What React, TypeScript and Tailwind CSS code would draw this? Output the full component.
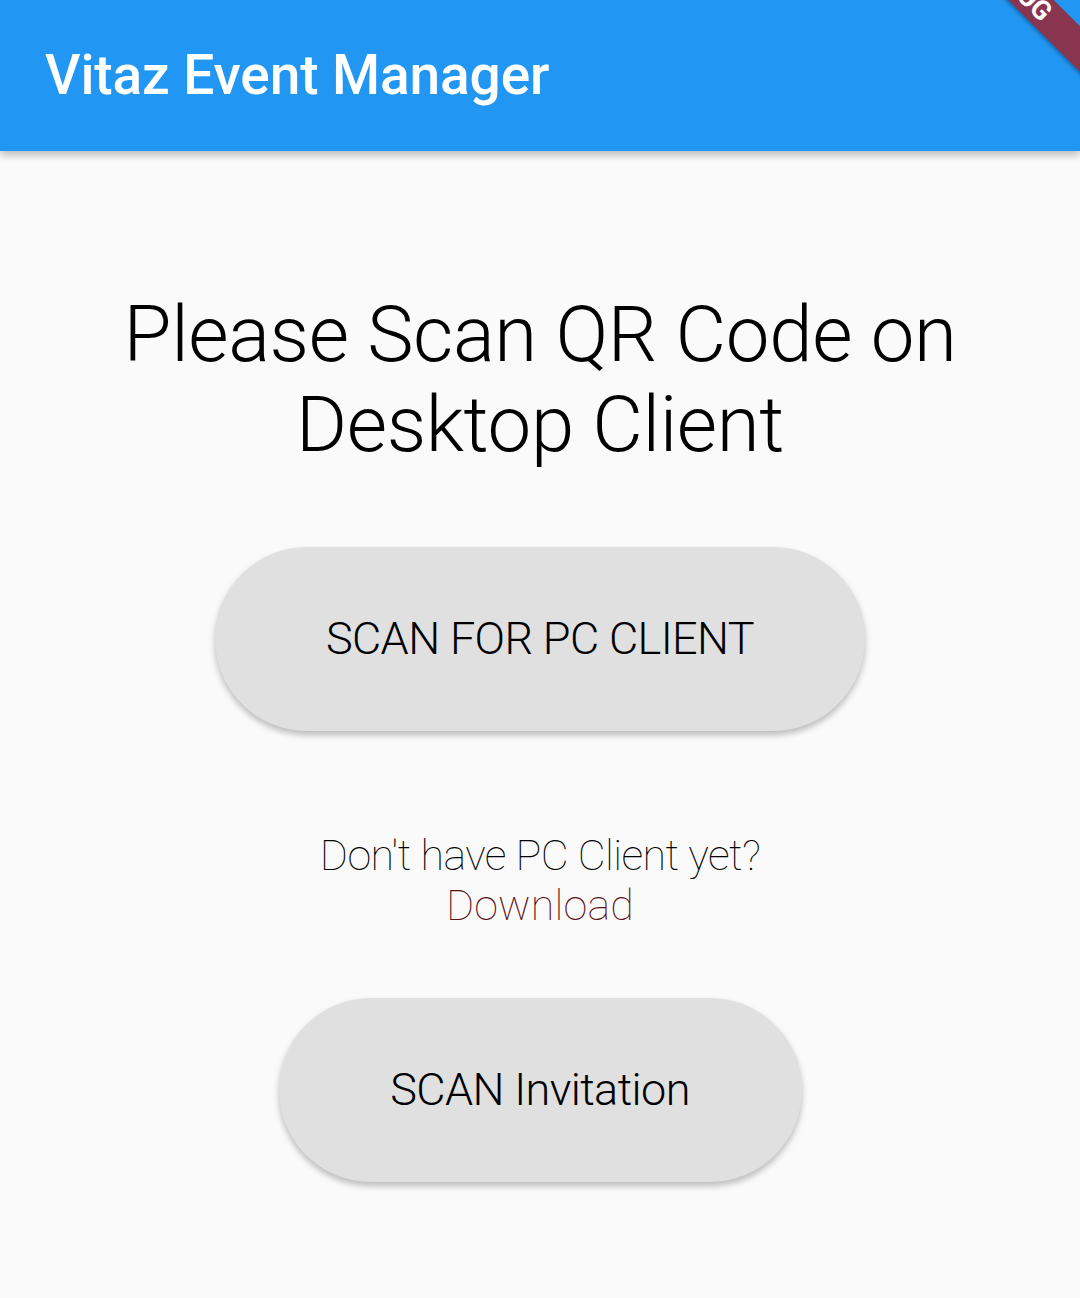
import React from "react";

const PillButton: React.FC<{ label: string; width: string }> = ({ label, width }) => (
  <button
    className={`${width} h-[184px] rounded-full bg-[#e0e0e0] text-black text-[45px] tracking-[-0.6px] font-light shadow-[0_4px_6px_rgba(0,0,0,0.25)]`}
  >
    {label}
  </button>
);

const App: React.FC = () => {
  return (
    <div
      className="relative w-[1080px] h-[1298px] overflow-hidden bg-[#fafafa]"
      style={{ fontFamily: "Roboto, 'Noto Sans', sans-serif" }}
    >
      <header className="relative z-10 h-[151px] bg-[#2196f3] flex items-center pl-[45px] shadow-[0_4px_8px_rgba(0,0,0,0.25)]">
        <h1 className="text-white text-[55px] font-medium tracking-[-0.1px]">Vitaz Event Manager</h1>
      </header>

      <main className="flex flex-col items-center">
        <h2 className="mt-[139px] text-center text-black text-[78px] tracking-[-0.4px] leading-[90px] font-light">
          Please Scan QR Code on
          <br />
          Desktop Client
        </h2>

        <div className="mt-[77px]">
          <PillButton label="SCAN FOR PC CLIENT" width="w-[650px]" />
        </div>

        <div className="mt-[99px] flex flex-col items-center text-[43px] leading-[50px] font-thin">
          <span className="text-black tracking-[-0.6px]">Don't have PC Client yet?</span>
          <span className="text-[#5c1014] tracking-[0.2px]">Download</span>
        </div>

        <div className="mt-[68px]">
          <PillButton label="SCAN Invitation" width="w-[523px]" />
        </div>
      </main>

      {/* debug banner */}
      <div className="absolute z-20 left-[867px] top-[-30px] w-[300px] h-[32px] rotate-45 bg-[#8a3550] flex items-center justify-center shadow-[0_2px_4px_rgba(0,0,0,0.3)]">
        <span className="text-white text-[27px] font-bold leading-none">DEBUG</span>
      </div>
    </div>
  );
};

export default App;
